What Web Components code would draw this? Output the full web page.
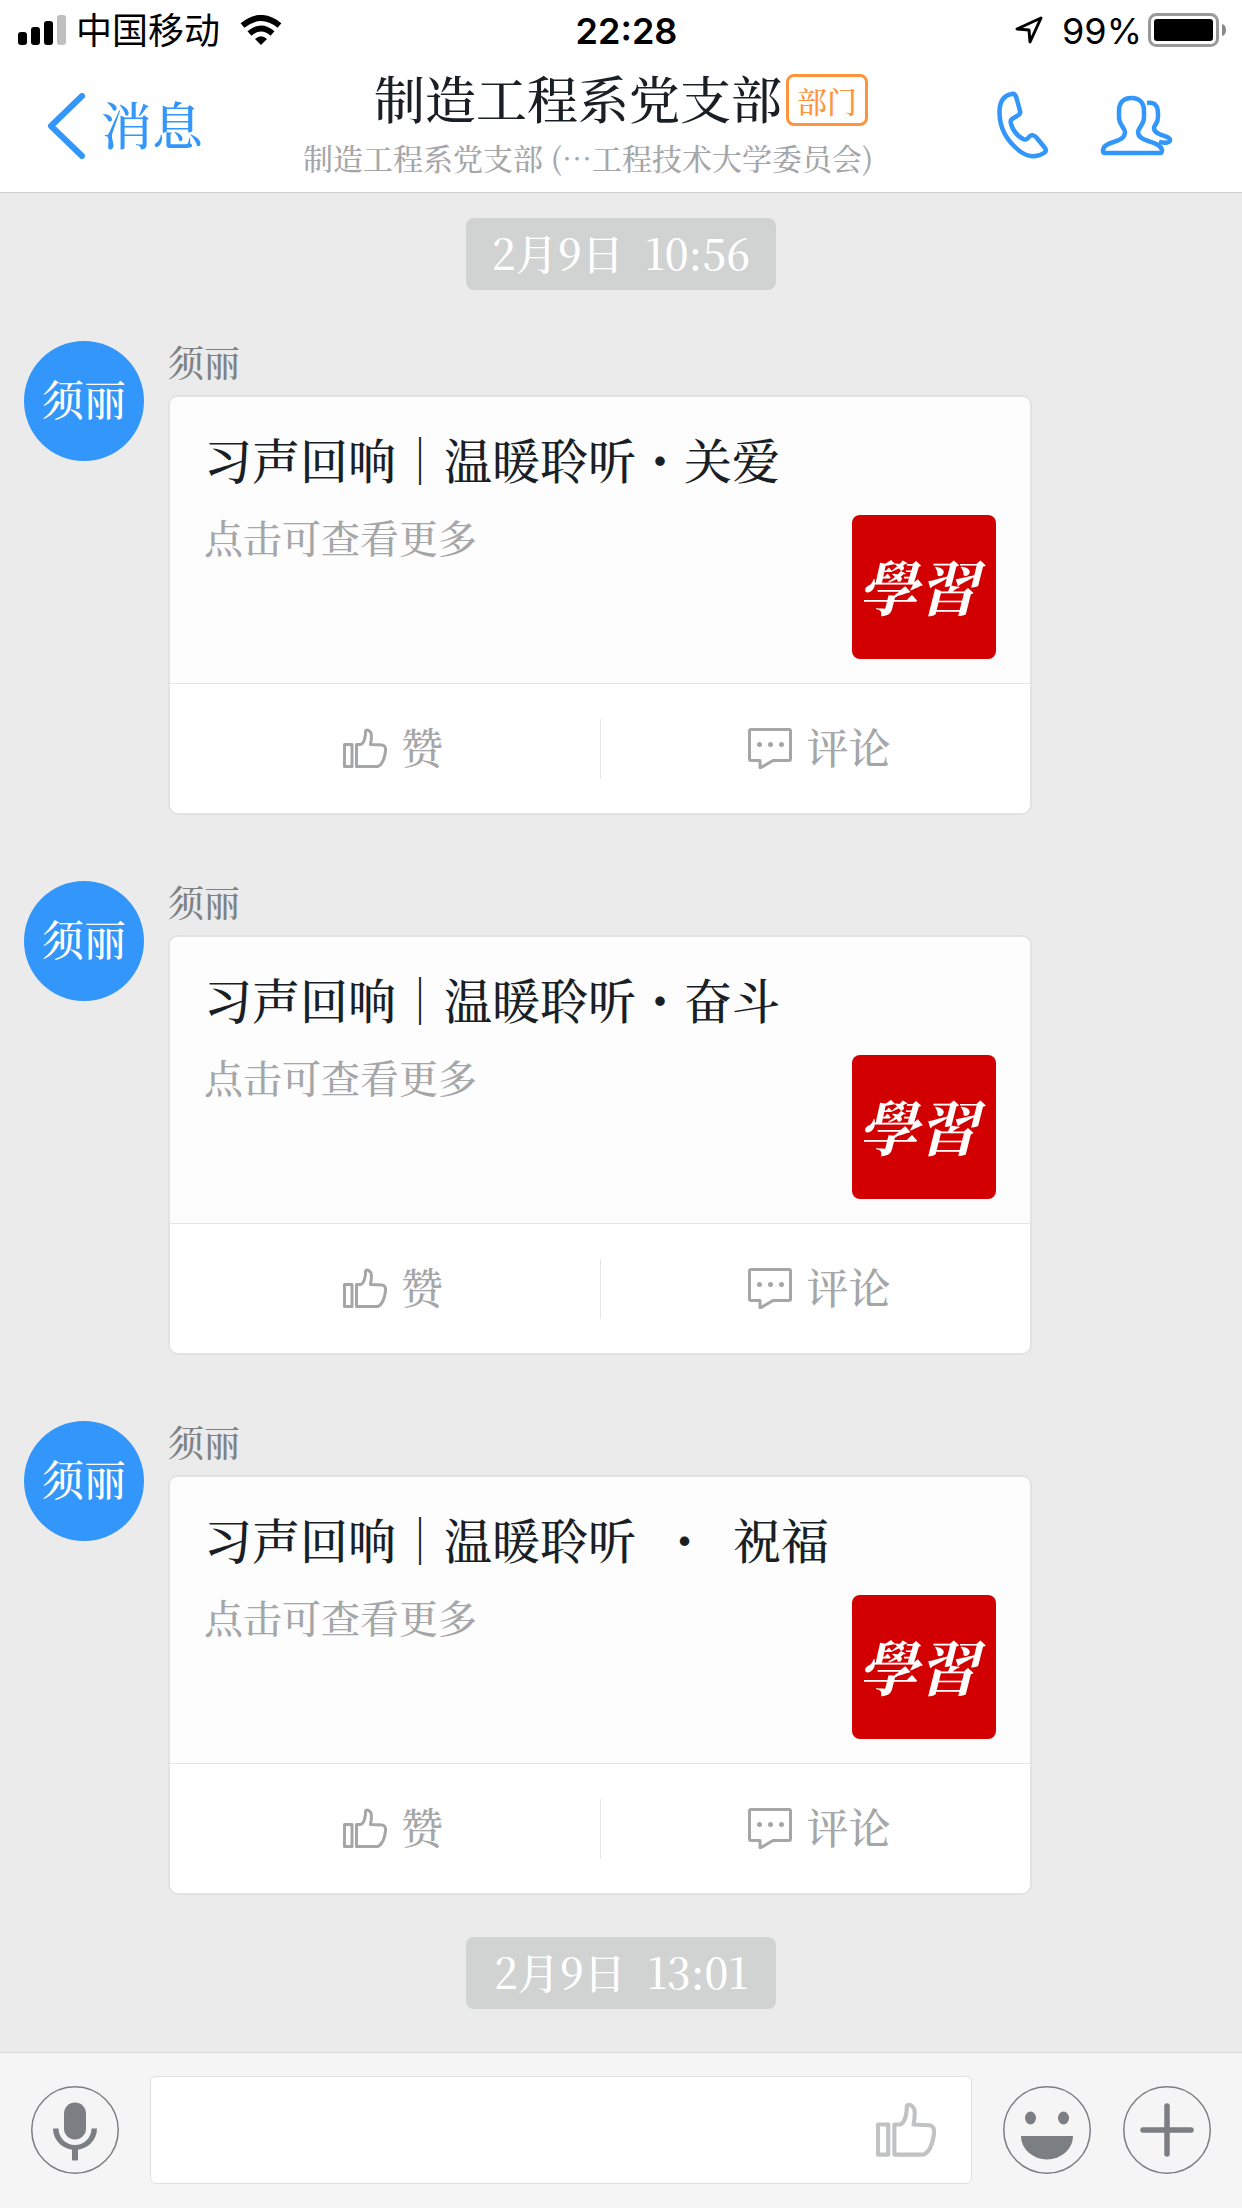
<!DOCTYPE html>
<html lang="zh-CN">
<head>
<meta charset="utf-8">
<meta name="viewport" content="width=device-width, initial-scale=1">
<title>制造工程系党支部</title>
<style>
  html, body { margin: 0; }
  body {
    font-family: "Noto Serif CJK SC", "Noto Sans CJK SC", serif;
    font-weight: 500;
    color: #191f25;
    background: #ebebeb;
  }
</style>
</head>
<body>
<chat-app></chat-app>
<script>
const define = (name, html) => customElements.define(name, class extends HTMLElement {
  constructor() {
    super();
    const t = document.createElement('template');
    t.innerHTML = html;
    this.attachShadow({ mode: 'open' }).appendChild(t.content.cloneNode(true));
  }
});

const reset = `* { box-sizing: border-box; } svg { display: block; flex: none; }
  button { font: inherit; color: inherit; background: none; border: 0; padding: 0; margin: 0; cursor: pointer; }`;

define('thumb-icon', `<style>:host { display: block; width: 44px; height: 41px; } svg { display: block; width: 100%; height: 100%; }</style>
  <svg viewBox="0 0 44 41" fill="none" stroke="currentColor" stroke-width="3" stroke-linejoin="round" aria-hidden="true">
    <rect x="1.5" y="16.5" width="7.5" height="22"/>
    <path d="M13.500 16.500H18C21 15 22.500 9 22.700 2.500Q25.500 .8 28 5Q29 9 27.500 16.500L39 17Q43 17.300 42.500 23Q41 35.500 35 38.500H13.500Z"/>
  </svg>`);

define('status-bar', `<style>${reset}
  :host { display: flex; align-items: center; height: 60px; padding: 0 15px 0 18px; color: #000; font-family: Inter, "Noto Sans CJK SC", sans-serif; font-size: 36px; line-height: 58px; }
  span { padding-top: 2px; }
  .side { flex: 1; display: flex; align-items: center; }
  .carrier { margin: 0 20px 0 10px; font-weight: 400; }
  .right { justify-content: flex-end; }
  .time { font-weight: 600; margin-left: 8px; }
  .pct { margin: 0 6px 0 19px; font-weight: 400; }
</style>
<div class="side">
  <svg width="48" height="30" viewBox="0 0 48 30"><rect y="17" width="9" height="13" rx="3"/><rect x="13" y="12" width="9" height="18" rx="3"/><rect x="26" y="6" width="9" height="24" rx="3"/><rect x="39" width="9" height="30" rx="3" fill="#bfbfbf"/></svg>
  <span class="carrier">中国移动</span>
  <svg width="42" height="30" viewBox="0 0 42 30" fill="none" stroke="#000" stroke-width="6"><path d="M2.500 10.500Q21-4.500 39.500 10.500"/><path d="M9.500 18.500Q21 8.500 32.500 18.500"/><path d="M15 24Q21 18.500 27 24L21 30Z" fill="#000" stroke="none"/></svg>
</div>
<span class="time">22:28</span>
<div class="side right">
  <svg width="28" height="28" viewBox="0 0 28 28" fill="none" stroke="#000" stroke-width="3" stroke-linejoin="round"><path d="M26 2L2 13L14 14L15 26Z"/></svg>
  <span class="pct">99%</span>
  <svg width="79" height="34" viewBox="0 0 79 34"><rect x="1.500" y="1.500" width="68" height="31" rx="7" fill="none" stroke="#999" stroke-width="3"/><rect x="6" y="6" width="59" height="22" rx="3"/><path d="M74 11Q78 12 78 17T74 23Z" fill="#888"/></svg>
</div>`);

define('chat-nav', `<style>${reset}
  :host { box-sizing: border-box; display: flex; align-items: flex-start; padding: 7px 69px 0 47px; height: 132px; }
  .back { display: flex; align-items: center; gap: 16px; color: #3296fa; font-size: 51px; line-height: 60px; margin-top: 26px; }
  .back span { padding-bottom: 6px; }
  .titles { display: flex; flex-direction: column; align-items: flex-end; margin-left: 100px; }
  .row { display: flex; align-items: center; gap: 4px; padding-right: 5px; }
  h1 { margin: 0; font-weight: 500; font-size: 51px; line-height: 60px; padding-bottom: 6px; }
  .tag { border: 3px solid #ff943e; border-radius: 8px; color: #ff943e; font-size: 30px; line-height: 46px; padding: 0 8px; }
  .sub { color: #a5a6a8; font-size: 30px; line-height: 36px; margin-top: 6px; white-space: nowrap; }
  .actions { display: flex; align-items: center; gap: 48px; margin: 22px 0 0 auto; color: #3296fa; }
</style>
<button class="back"><svg width="38" height="66" viewBox="0 0 38 66" fill="none" stroke="currentColor" stroke-width="6" stroke-linecap="round" stroke-linejoin="round"><path d="M35 3L4 33L35 63"/></svg><span>消息</span></button>
<div class="titles">
  <div class="row"><h1>制造工程系党支部</h1><span class="tag">部门</span></div>
  <div class="sub">制造工程系党支部 (…工程技术大学委员会)</div>
</div>
<div class="actions">
  <button aria-label="电话"><svg width="56" height="72" viewBox="0 0 56 72" fill="none" stroke="currentColor" stroke-width="4.500" stroke-linejoin="round"><path d="M17 5Q20 4 21.500 9L25 22Q26 25 22 27L17 30Q15 31 16 35Q19 45 28 50Q30 51 32 50L35 47Q38 45 41 48L50 59Q52 62 49 64Q38 71 26 63Q4 47 4.500 22Q5 7 17 5Z"/></svg></button>
  <button aria-label="群成员"><svg width="74" height="64" viewBox="0 0 74 64" fill="none" stroke="currentColor" stroke-width="4.500" stroke-linejoin="round"><path d="M32.500 5C24 5 20 10 20 18V24C20 32 26 35 26 39C26 51 4 47 4 58Q4 60 6 60H61Q63 60 63 57C61 47 39 50 39 39C39 35 45 32 45 24V18C45 10 41 5 32.500 5Z"/><path d="M48 10C56 9 59 13 59 20V24C59 31 55 32 55 35C55 43 71 42 71 47Q71 51 60 49"/></svg></button>
</div>`);

define('date-pill', `<style>
  :host { box-sizing: border-box; align-self: center; display: block; min-width: 310px; text-align: center; background: #d1d3d2; border-radius: 8px; color: #fff; padding: 0 24px 4px; font-size: 42px; line-height: 68px; white-space: pre; }
</style><slot></slot>`);

define('study-logo', `<style>
  :host { box-sizing: border-box; display: flex; align-items: center; justify-content: center; width: 144px; height: 144px; padding: 0 12px 4px 0; border-radius: 8px; background: #d20000; color: #fff; font-size: 60px; font-style: italic; font-weight: 700; line-height: 80px; }
</style><span>學習</span>`);

define('message-item', `<style>${reset}
  :host { display: flex; align-items: flex-start; gap: 24px; padding-left: 24px; }
  .avatar { flex: none; width: 120px; height: 120px; border-radius: 50%; background: #3296fa; color: #fff; font-size: 42px; line-height: 114px; text-align: center; }
  .body { width: 864px; }
  .name { color: #7e8284; font-size: 36px; line-height: 42px; padding-bottom: 12px; }
  .card { border: 2px solid #e2e2e2; border-radius: 10px; background: #fff; overflow: hidden; }
  .content { display: grid; grid-template-columns: 1fr auto; background: #fdfdfd; padding: 33px 34px 24px; border-bottom: 1px solid #e5e5e6; }
  h2 { grid-column: 1 / -1; margin: 0; font-weight: 500; font-size: 48px; line-height: 58px; white-space: pre; }
  .more { color: #a5a6a8; font-size: 39px; line-height: 46px; padding-top: 25px; }
  study-logo { margin-top: 27px; }
  .actions { display: grid; grid-template-columns: 1fr 1fr; align-items: center; height: 129px; color: #a5a6a8; font-size: 42px; line-height: 54px; }
  .actions button { height: 60px; display: flex; align-items: center; justify-content: center; gap: 14px; }
  .actions span { padding-bottom: 6px; }
  .actions .like { padding-left: 16px; }
  .actions .comment { padding-left: 8px; border-left: 1px solid #e5e5e6; }
</style>
<div class="avatar">须丽</div>
<div class="body">
  <div class="name">须丽</div>
  <article class="card">
    <div class="content">
      <h2><slot></slot></h2>
      <div class="more">点击可查看更多</div>
      <study-logo></study-logo>
    </div>
    <div class="actions">
      <button class="like"><thumb-icon></thumb-icon><span>赞</span></button>
      <button class="comment"><svg width="44" height="41" viewBox="0 0 44 41" fill="none" stroke="currentColor" stroke-width="3" stroke-linejoin="round"><path d="M3 1.500H41Q42.500 1.500 42.500 3V31Q42.500 32.500 41 32.500H25L13 39.500H12V32.500H3Q1.500 32.500 1.500 31V3Q1.500 1.500 3 1.500Z"/><g fill="currentColor" stroke="none"><circle cx="11.500" cy="16.500" r="2.500"/><circle cx="22.500" cy="16.500" r="2.500"/><circle cx="33.500" cy="16.500" r="2.500"/></g></svg><span>评论</span></button>
    </div>
  </article>
</div>`);

define('message-composer', `<style>${reset}
  :host { box-sizing: border-box; display: flex; align-items: center; gap: 31px; padding: 23px 31px 24px; background: #f5f5f6; border-top: 1px solid #dadada; color: #7b7e83; }
  .field { flex: 1; display: flex; align-items: center; height: 108px; padding-right: 34px; border: 1px solid #e0e0e1; border-radius: 6px; background: #fff; }
  input { flex: 1; min-width: 0; height: 100%; border: 0; outline: 0; background: none; padding: 0 24px; font: inherit; font-size: 42px; color: #191f25; }
  .field button { color: #c1c2c4; }
  thumb-icon { width: 62px; height: 56px; }
  .tools { display: flex; gap: 32px; }
</style>
<button aria-label="语音"><svg width="88" height="88" viewBox="0 0 88 88"><circle cx="44" cy="44" r="43.250" fill="none" stroke="currentColor" stroke-width="1.500"/><g fill="currentColor"><rect x="33" y="16.500" width="22" height="37" rx="11"/><path d="M22 42.500A22 21.500 0 0 0 66 42.500H60.500A16.500 16.500 0 0 1 27.500 42.500Z"/><rect x="41" y="62" width="6" height="12.500" rx="1"/></g></svg></button>
<div class="field"><input type="text" aria-label="输入消息"><button aria-label="赞"><thumb-icon></thumb-icon></button></div>
<div class="tools">
  <button aria-label="表情"><svg width="88" height="88" viewBox="0 0 88 88"><circle cx="44" cy="44" r="43.250" fill="none" stroke="currentColor" stroke-width="1.500"/><g fill="currentColor"><ellipse cx="27.500" cy="32" rx="5.500" ry="6.500"/><ellipse cx="60.500" cy="32" rx="5.500" ry="6.500"/><path d="M18 50H70A26 23.500 0 0 1 18 50Z"/></g></svg></button>
  <button aria-label="更多"><svg width="88" height="88" viewBox="0 0 88 88" fill="none" stroke="currentColor"><circle cx="44" cy="44" r="43.250" stroke-width="1.500"/><path d="M44 20V68M20 44H68" stroke-width="5.500" stroke-linecap="round"/></svg></button>
</div>`);

define('chat-app', `<style>
  :host { display: flex; flex-direction: column; min-height: 100vh; }
  header { background: #fff; border-bottom: 1px solid #cfcfcf; }
  main { flex: 1; display: flex; flex-direction: column; padding: 25px 0 43px; }
  .list { display: flex; flex-direction: column; gap: 66px; padding: 51px 0 42px; }
</style>
<header><status-bar></status-bar><chat-nav></chat-nav></header>
<main>
  <date-pill>2月9日  10:56</date-pill>
  <div class="list">
    <message-item>习声回响｜温暖聆听・关爱</message-item>
    <message-item>习声回响｜温暖聆听・奋斗</message-item>
    <message-item>习声回响｜温暖聆听  ・  祝福</message-item>
  </div>
  <date-pill>2月9日  13:01</date-pill>
</main>
<message-composer></message-composer>`);
</script>
</body>
</html>
